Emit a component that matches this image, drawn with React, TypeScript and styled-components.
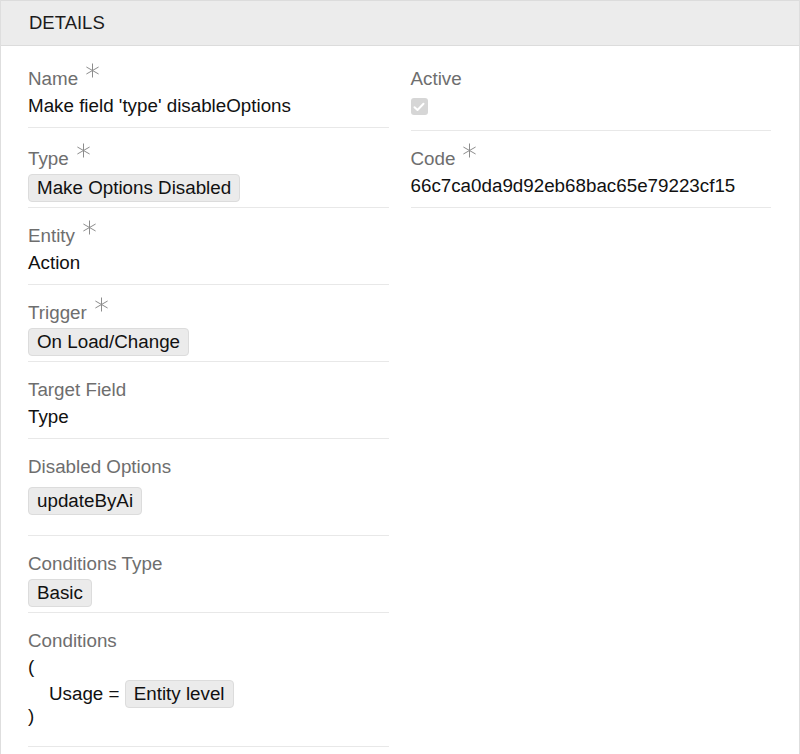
import React from 'react';
import styled, { createGlobalStyle } from 'styled-components';

const GlobalStyle = createGlobalStyle`
  html, body {
    margin: 0;
    padding: 0;
    background: #fff;
  }
  body {
    font-family: 'Liberation Sans', Arial, Helvetica, sans-serif;
    font-size: 18.8px;
    color: #111;
  }
  * {
    box-sizing: border-box;
  }
`;

const Panel = styled.section`
  width: 800px;
  border-left: 1px solid #dedede;
  border-right: 1px solid #dedede;
`;

const PanelHeader = styled.header`
  height: 46px;
  line-height: 44px;
  padding-left: 28px;
  background: #ececec;
  border-top: 1px solid #dcdcdc;
  border-bottom: 1px solid #dcdcdc;
  font-size: 18.5px;
  color: #1c1c1c;
`;

const PanelBody = styled.div`
  display: grid;
  grid-template-columns: 1fr 1fr;
  column-gap: 22px;
  align-items: start;
  padding: 5px 28px 20px 27px;
`;

const Field = styled.div<{ $col: 1 | 2 }>`
  grid-column: ${(p) => p.$col};
  padding-top: 14px;
  border-bottom: 1px solid #e8e8e8;
`;

const Label = styled.div`
  line-height: 27px;
  color: #6e6e6e;
  white-space: nowrap;
`;

const Required = styled.svg`
  width: 15px;
  height: 15px;
  margin-left: 7px;
  vertical-align: top;
  margin-top: -2px;
  stroke: #8c8c8c;
  stroke-width: 1;
  fill: none;
`;

const TextValue = styled.div`
  line-height: 27px;
  padding-bottom: 8px;
  color: #111;
`;

const BadgeValue = styled.div<{ $spacing?: 'tight' | 'loose' }>`
  display: flex;
  gap: 6px;
  padding: ${(p) => (p.$spacing === 'loose' ? '7px 0 20px' : '2px 0 5px')};
`;

const Badge = styled.span`
  display: inline-block;
  height: 28px;
  line-height: 26px;
  padding: 0 8px;
  background: #ebebeb;
  border: 1px solid #dcdcdc;
  border-radius: 4px;
  color: #111;
  white-space: nowrap;
`;

const CheckBox = styled.span`
  display: flex;
  align-items: center;
  justify-content: center;
  width: 17px;
  height: 17px;
  margin: 6px 0 15px;
  background: #d6d6d6;
  border-radius: 3px;
`;

const ConditionBlock = styled.div`
  padding-bottom: 22px;
  color: #111;
`;

const Paren = styled.div<{ $close?: boolean }>`
  line-height: ${(p) => (p.$close ? '16px' : '22px')};
  margin-top: ${(p) => (p.$close ? '0' : '2px')};
`;

const ConditionLine = styled.div`
  display: flex;
  align-items: center;
  height: 28px;
  margin-top: 2px;
  padding-left: 21px;
  white-space: pre;
`;

const Asterisk = () => (
  <Required viewBox="0 0 15 15">
    <line x1="7.5" y1="0.5" x2="7.5" y2="14.5" />
    <line x1="1.4" y1="4" x2="13.6" y2="11" />
    <line x1="1.4" y1="11" x2="13.6" y2="4" />
  </Required>
);

const FieldLabel = ({ text, required }: { text: string; required?: boolean }) => (
  <Label>
    {text}
    {required && <Asterisk />}
  </Label>
);

const App = () => {
  return (
    <>
      <GlobalStyle />
      <Panel>
        <PanelHeader>DETAILS</PanelHeader>
        <PanelBody>
          <Field $col={1}>
            <FieldLabel text="Name" required />
            <TextValue>Make field 'type' disableOptions</TextValue>
          </Field>
          <Field $col={2}>
            <FieldLabel text="Active" />
            <CheckBox>
              <svg width="12" height="10" viewBox="0 0 12 10">
                <path
                  d="M1.5 5.2 L4.5 8 L10.5 1.8"
                  fill="none"
                  stroke="#fff"
                  strokeWidth="2"
                  strokeLinecap="round"
                  strokeLinejoin="round"
                />
              </svg>
            </CheckBox>
          </Field>

          <Field $col={1}>
            <FieldLabel text="Type" required />
            <BadgeValue>
              <Badge>Make Options Disabled</Badge>
            </BadgeValue>
          </Field>
          <Field $col={2}>
            <FieldLabel text="Code" required />
            <TextValue>66c7ca0da9d92eb68bac65e79223cf15</TextValue>
          </Field>

          <Field $col={1}>
            <FieldLabel text="Entity" required />
            <TextValue>Action</TextValue>
          </Field>

          <Field $col={1}>
            <FieldLabel text="Trigger" required />
            <BadgeValue>
              <Badge>On Load/Change</Badge>
            </BadgeValue>
          </Field>

          <Field $col={1}>
            <FieldLabel text="Target Field" />
            <TextValue>Type</TextValue>
          </Field>

          <Field $col={1}>
            <FieldLabel text="Disabled Options" />
            <BadgeValue $spacing="loose">
              <Badge>updateByAi</Badge>
            </BadgeValue>
          </Field>

          <Field $col={1}>
            <FieldLabel text="Conditions Type" />
            <BadgeValue>
              <Badge>Basic</Badge>
            </BadgeValue>
          </Field>

          <Field $col={1}>
            <FieldLabel text="Conditions" />
            <ConditionBlock>
              <Paren>(</Paren>
              <ConditionLine>
                {'Usage = '}
                <Badge>Entity level</Badge>
              </ConditionLine>
              <Paren $close>)</Paren>
            </ConditionBlock>
          </Field>
        </PanelBody>
      </Panel>
    </>
  );
};

export default App;
